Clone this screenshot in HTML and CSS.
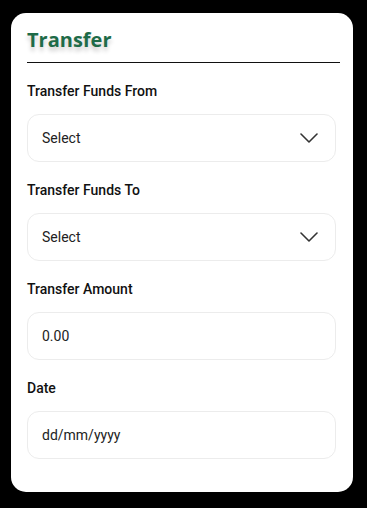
FILE: index.html
```html
<!DOCTYPE html>
<html lang="en">
<head>
    <meta charset="UTF-8">
    <meta name="viewport" content="width=device-width, initial-scale=1.0">
    <title>Transfer</title>
    <link rel="stylesheet" href="styles.css">
</head>
<body>
    <div class="card">
        <div class="header">
            <h2>Transfer</h2>
        </div>
        <div class="field">
            <label>Transfer Funds From</label>
            <div class="control">
                <span>Select</span>
                <svg class="chevron" width="18" height="10" viewBox="0 0 18 10"><path d="M1 1 L9 9 L17 1" fill="none" stroke="#333" stroke-width="1.6" stroke-linecap="round" stroke-linejoin="round"/></svg>
            </div>
        </div>
        <div class="field">
            <label>Transfer Funds To</label>
            <div class="control">
                <span>Select</span>
                <svg class="chevron" width="18" height="10" viewBox="0 0 18 10"><path d="M1 1 L9 9 L17 1" fill="none" stroke="#333" stroke-width="1.6" stroke-linecap="round" stroke-linejoin="round"/></svg>
            </div>
        </div>
        <div class="field">
            <label>Transfer Amount</label>
            <div class="control">
                <span>0.00</span>
            </div>
        </div>
        <div class="field">
            <label>Date</label>
            <div class="control">
                <span>dd/mm/yyyy</span>
            </div>
        </div>
    </div>
</body>
</html>
```

FILE: styles.css
```css
body {
    margin: 0;
    background-color: #000;
    font-family: Roboto, "Liberation Sans", sans-serif;
}
.card {
    margin: 13px 0 0 11px;
    width: 342px;
    height: 479px;
    box-sizing: border-box;
    padding: 14px 13px 0 16px;
    background: #fff;
    border-radius: 15px;
}
.header {
    padding-bottom: 9px;
    border-bottom: 1px solid #111;
}
.header h2 {
    margin: 0;
    font-family: "Open Sans", sans-serif;
    font-weight: 700;
    font-size: 20px;
    line-height: 26px;
    color: #1e6b48;
    text-shadow: 0 4px 4px rgba(0,0,0,0.2);
}
.field {
    margin-top: 20px;
    width: 309px;
}
label {
    display: block;
    font-weight: 500;
    font-size: 14px;
    line-height: 16px;
    color: #111;
}
.control {
    margin-top: 15px;
    height: 48px;
    box-sizing: border-box;
    border: 1px solid #ececec;
    border-radius: 12px;
    padding: 0 17px 0 14px;
    display: flex;
    align-items: center;
    justify-content: space-between;
    font-size: 14px;
    color: #222;
}
```
